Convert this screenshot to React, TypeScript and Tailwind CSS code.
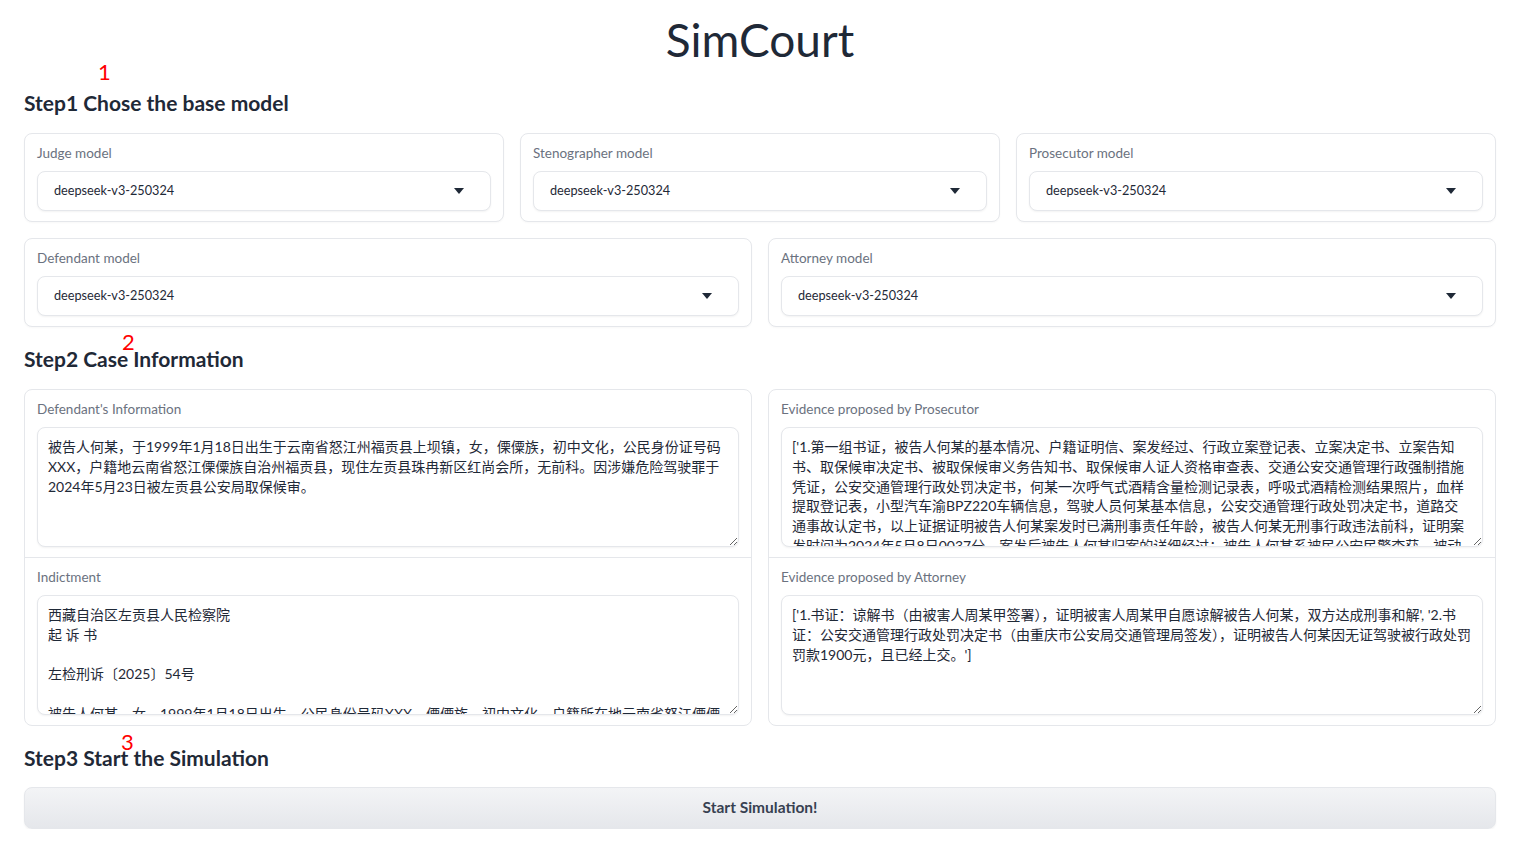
import React from "react";

const FONT = { fontFamily: '"Lato", "Noto Sans CJK SC", sans-serif' };

function Caret() {
  return (
    <svg width="10" height="6" viewBox="0 0 10 6" className="shrink-0">
      <path d="M0 0 L10 0 L5 6 Z" fill="#1f2937" />
    </svg>
  );
}

function SelectCard({ label }: { label: string }) {
  return (
    <div className="flex-1 rounded-lg border border-[#e5e7eb] bg-white px-3 pt-[10px] pb-[10px] shadow-[0_1px_2px_rgba(0,0,0,0.03)]">
      <div className="text-[13.5px] leading-[18px] text-[#6b7280]">{label}</div>
      <div className="mt-[9px] flex h-10 items-center justify-between rounded-lg border border-[#e5e7eb] bg-white pl-4 pr-[26px] shadow-[0_1px_2px_rgba(0,0,0,0.05)]">
        <span className="text-[12.7px] text-[#1f2937]">deepseek-v3-250324</span>
        <Caret />
      </div>
    </div>
  );
}

function TextBlock({ label, value }: { label: string; value: string }) {
  return (
    <div className="px-3 pt-[10px] pb-[10px]">
      <div className="text-[13.5px] leading-[18px] text-[#6b7280]">{label}</div>
      <textarea
        readOnly
        value={value}
        style={FONT}
        className="mt-[9px] block h-[120px] w-full resize-y overflow-hidden rounded-lg border border-[#e5e7eb] bg-white px-[10px] py-[9px] text-[14px] leading-[19.8px] text-[#1f2937] shadow-[0_1px_2px_rgba(0,0,0,0.05)] outline-none"
      />
    </div>
  );
}

const defendantInfo =
  "被告人何某，于1999年1月18日出生于云南省怒江州福贡县上坝镇，女，傈僳族，初中文化，公民身份证号码XXX，户籍地云南省怒江傈僳族自治州福贡县，现住左贡县珠冉新区红尚会所，无前科。因涉嫌危险驾驶罪于2024年5月23日被左贡县公安局取保候审。";

const indictment =
  "西藏自治区左贡县人民检察院\n起 诉 书\n\n左检刑诉〔2025〕54号\n\n被告人何某，女，1999年1月18日出生，公民身份号码XXX，傈僳族，初中文化，户籍所在地云南省怒江傈僳族自治州福贡县，现住左贡县珠冉新区。因涉嫌危险驾驶罪，于2024年5月23日被左贡县公安局取保候审。";

const prosecutorEvidence =
  "['1.第一组书证，被告人何某的基本情况、户籍证明信、案发经过、行政立案登记表、立案决定书、立案告知书、取保候审决定书、被取保候审义务告知书、取保候审人证人资格审查表、交通公安交通管理行政强制措施凭证，公安交通管理行政处罚决定书，何某一次呼气式酒精含量检测记录表，呼吸式酒精检测结果照片，血样提取登记表，小型汽车渝BPZ220车辆信息，驾驶人员何某基本信息，公安交通管理行政处罚决定书，道路交通事故认定书，以上证据证明被告人何某案发时已满刑事责任年龄，被告人何某无刑事行政违法前科，证明案发时间为2024年5月8日0037分，案发后被告人何某归案的详细经过：被告人何某系被民公安民警查获，被动归案。']";

const attorneyEvidence =
  "['1.书证：谅解书（由被害人周某甲签署），证明被害人周某甲自愿谅解被告人何某，双方达成刑事和解', '2.书证：公安交通管理行政处罚决定书（由重庆市公安局交通管理局签发），证明被告人何某因无证驾驶被行政处罚罚款1900元，且已经上交。']";

function Marker({ n, className }: { n: string; className: string }) {
  return (
    <span
      className={`pointer-events-none absolute text-[22px] leading-none text-[#ff0000] ${className}`}
      style={FONT}
    >
      {n}
    </span>
  );
}

export default function App() {
  return (
    <div className="bg-white text-[#1f2937]" style={FONT}>
      <div className="ml-[24px] w-[1472px] pt-[12px]">
        <h1 className="text-center text-[46px] leading-[56px] font-normal text-[#1f2937]">SimCourt</h1>

        <div className="relative mt-[20px] h-[30px]">
          <Marker n="1" className="left-[74px] top-[-27px]" />
          <h2 className="text-[21px] leading-[30px] font-bold">Step1 Chose the base model</h2>
        </div>

        <div className="mt-[15px] flex gap-4">
          <SelectCard label="Judge model" />
          <SelectCard label="Stenographer model" />
          <SelectCard label="Prosecutor model" />
        </div>
        <div className="mt-4 flex gap-4">
          <SelectCard label="Defendant model" />
          <SelectCard label="Attorney model" />
        </div>

        <div className="relative mt-[17px] h-[30px]">
          <Marker n="2" className="left-[98px] top-[-13px]" />
          <h2 className="text-[21px] leading-[30px] font-bold">Step2 Case Information</h2>
        </div>

        <div className="mt-[15px] flex gap-4">
          <div className="flex-1 divide-y divide-[#e5e7eb] rounded-lg border border-[#e5e7eb] bg-white">
            <TextBlock label="Defendant's Information" value={defendantInfo} />
            <TextBlock label="Indictment" value={indictment} />
          </div>
          <div className="flex-1 divide-y divide-[#e5e7eb] rounded-lg border border-[#e5e7eb] bg-white">
            <TextBlock label="Evidence proposed by Prosecutor" value={prosecutorEvidence} />
            <TextBlock label="Evidence proposed by Attorney" value={attorneyEvidence} />
          </div>
        </div>

        <div className="relative mt-[17px] h-[30px]">
          <Marker n="3" className="left-[97px] top-[-12px]" />
          <h2 className="text-[21px] leading-[30px] font-bold">Step3 Start the Simulation</h2>
        </div>

        <button className="mt-[14px] flex h-[42px] w-full items-center justify-center rounded-lg border border-[#e5e7eb] bg-gradient-to-b from-[#f3f4f6] to-[#e5e7eb] text-[15.5px] font-bold text-[#374151] shadow-[0_1px_2px_rgba(0,0,0,0.05)]">
          Start Simulation!
        </button>
      </div>
    </div>
  );
}
